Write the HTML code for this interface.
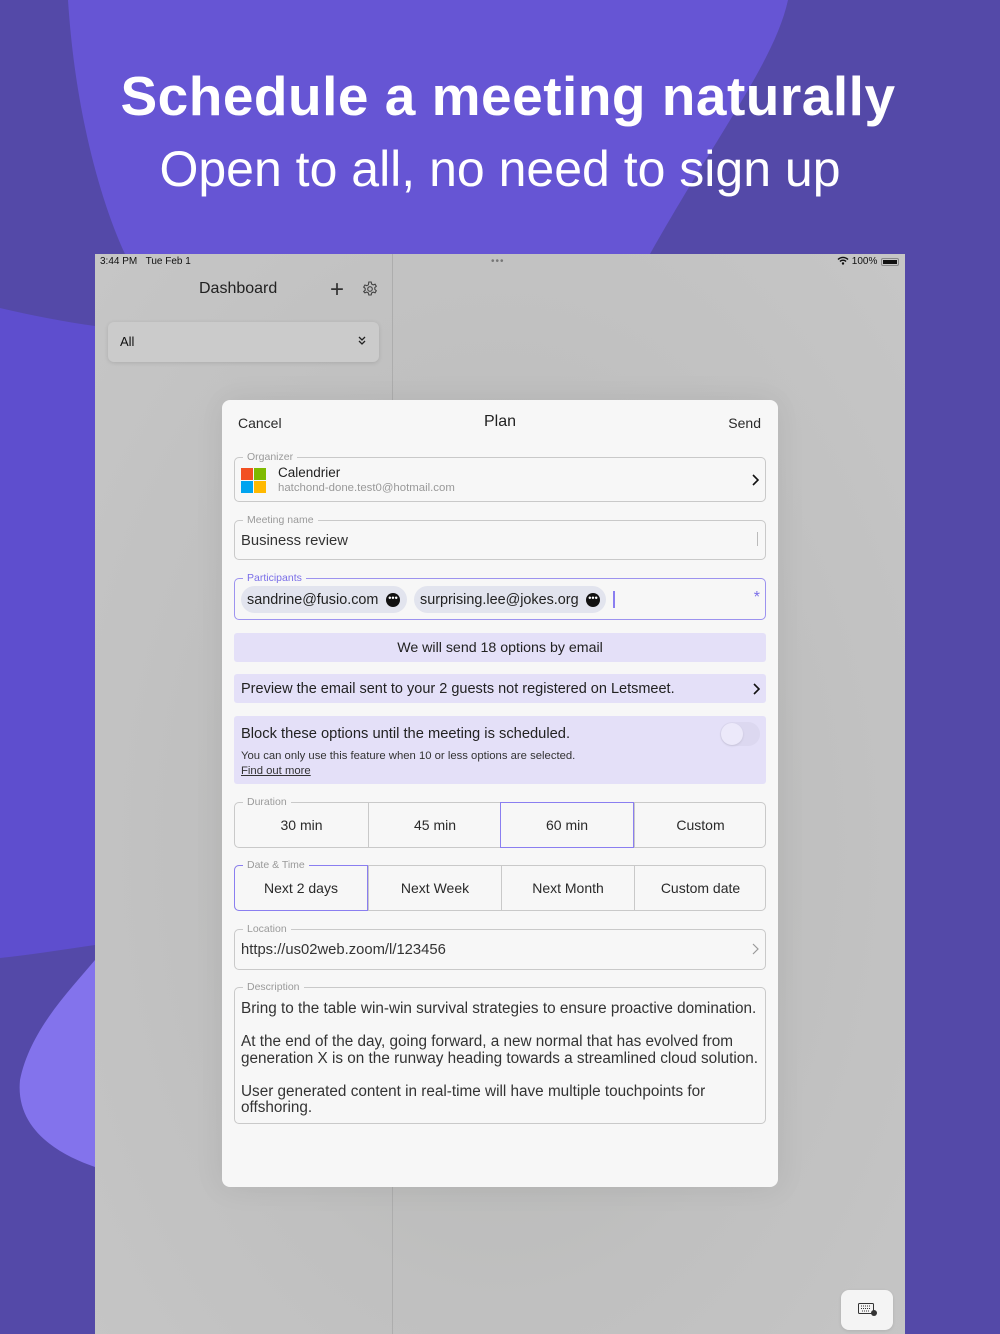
<!DOCTYPE html>
<html><head><meta charset="utf-8"><style>
*{margin:0;padding:0;box-sizing:border-box}
body{width:1000px;height:1334px;overflow:hidden;background:#5449A8;font-family:"Liberation Sans",sans-serif;position:relative}
.a{position:absolute}
.h1{left:8px;width:1000px;text-align:center;color:#fff;font-weight:bold;font-size:55px;top:64px;letter-spacing:0.5px}
.h2{left:0;width:1000px;text-align:center;color:#fff;font-size:50px;top:140px}
.screen{left:95px;top:254px;width:810px;height:1080px;background:radial-gradient(ellipse at 50% 55%,#b4b5b2 0%,#c0c0c0 55%,#c6c6c6 100%);overflow:hidden}
.modal{left:222px;top:400px;width:556px;height:787px;background:#f7f7f7;border-radius:8px;box-shadow:0 0 30px rgba(0,0,0,0.08)}
.fs{position:absolute;border:1px solid #c9c9c9;border-radius:5px}
.lbl{position:absolute;top:-8px;left:8px;background:#f7f7f7;padding:0 4px;font-size:10.5px;color:#9a9a9a;line-height:14px}
.t{font-size:14px;color:#2a2a2a}
.seg{position:absolute;top:0;height:100%;display:flex;align-items:center;justify-content:center;font-size:14px;color:#2a2a2a;border-left:1px solid #c9c9c9}
.sel{border:1px solid #8a7ef0;border-radius:0;z-index:2}
</style></head><body>
<svg class="a" style="left:0;top:0" width="1000" height="1334">
<path d="M68 0 C75 110 100 200 125 254 L650 254 C720 130 775 60 788 0 Z" fill="#6655D4"/>
<path d="M0 308 C30 315 65 322 95 326 L95 945 C60 950 30 955 0 958 Z" fill="#5E4ECE"/>
<path d="M95 960 C70 990 30 1030 20 1080 C15 1130 60 1155 95 1167 Z" fill="#8373EC"/>
</svg>
<div class="a h1">Schedule a meeting naturally</div>
<div class="a h2">Open to all, no need to sign up</div>
<div class="a screen">
  <div class="a" style="left:5px;top:2px;font-size:10px;color:#111">3:44 PM&nbsp;&nbsp;&nbsp;Tue Feb 1</div>
  <div class="a" style="left:396px;top:2px;font-size:10px;color:#777;letter-spacing:1px">•••</div>
  <div class="a" style="left:742px;top:2px;font-size:10px;color:#111">
    <svg width="12" height="9" viewBox="0 0 12 9" style="vertical-align:-1px"><path d="M1 3.5a7 7 0 0 1 10 0M3 5.5a4 4 0 0 1 6 0" stroke="#111" stroke-width="1.4" fill="none"/><circle cx="6" cy="7.5" r="1.2" fill="#111"/></svg> 100%</div>
  <div class="a" style="left:786px;top:4px;width:18px;height:8px;border:1px solid #888;border-radius:2px;padding:1px"><div style="background:#111;width:100%;height:100%"></div></div>
  <div class="a" style="left:297px;top:0;width:1px;height:1080px;background:#adadad"></div>
  <div class="a" style="left:104px;top:26px;font-size:16px;color:#222">Dashboard</div>
  <div class="a" style="left:235px;top:25px;font-size:24px;color:#333;line-height:22px;font-weight:300">+</div>
  <svg class="a" style="left:267px;top:27px" width="16" height="16" viewBox="0 0 16 16"><circle cx="8" cy="8" r="2.3" fill="none" stroke="#444" stroke-width="1.1"/><path d="M6.8 1h2.4l.4 2 1.6.9 1.9-.7 1.2 2.1-1.5 1.3v1.8l1.5 1.3-1.2 2.1-1.9-.7-1.6.9-.4 2H6.8l-.4-2-1.6-.9-1.9.7L1.7 10.5l1.5-1.3V7.4L1.7 6.1l1.2-2.1 1.9.7 1.6-.9z" fill="none" stroke="#444" stroke-width="1.1"/></svg>
  <div class="a" style="left:13px;top:68px;width:271px;height:40px;background:#cbcbcb;border-radius:6px;box-shadow:0 1px 4px rgba(0,0,0,0.12)"></div>
  <div class="a" style="left:25px;top:80px;font-size:13px;color:#111">All</div>
  <svg class="a" style="left:263px;top:82px" width="8" height="10" viewBox="0 0 8 10"><path d="M1 1l3 3 3-3M1 5l3 3 3-3" fill="none" stroke="#222" stroke-width="1.3"/></svg>
  <div class="a" style="left:746px;top:1036px;width:52px;height:40px;background:#f4f4f4;border-radius:8px;box-shadow:0 1px 3px rgba(0,0,0,0.1)"></div>
  <svg class="a" style="left:763px;top:1049px" width="20" height="14" viewBox="0 0 20 14"><rect x="0.5" y="0.5" width="15" height="10" rx="1" fill="none" stroke="#333"/><path d="M3 3h10M3 5.5h10M4 8h8" stroke="#333" stroke-width="1" stroke-dasharray="1 1"/><circle cx="16" cy="10" r="3" fill="#333"/></svg>
</div>
<div class="a modal">
  <div class="a t" style="left:16px;top:15px">Cancel</div>
  <div class="a" style="left:0;width:556px;text-align:center;top:13px;font-size:16px;color:#222">Plan</div>
  <div class="a t" style="right:17px;top:15px">Send</div>

  <div class="fs" style="left:12px;top:57px;width:532px;height:45px"><div class="lbl">Organizer</div>
    <div class="a" style="left:6px;top:10px;width:12px;height:12px;background:#F25022"></div>
    <div class="a" style="left:19px;top:10px;width:12px;height:12px;background:#7FBA00"></div>
    <div class="a" style="left:6px;top:23px;width:12px;height:12px;background:#00A4EF"></div>
    <div class="a" style="left:19px;top:23px;width:12px;height:12px;background:#FFB900"></div>
    <div class="a" style="left:43px;top:7px;font-size:13.5px;color:#222">Calendrier</div>
    <div class="a" style="left:43px;top:24px;font-size:11.4px;color:#999">hatchond-done.test0@hotmail.com</div>
    <svg class="a" style="right:6px;top:16px" width="8" height="12" viewBox="0 0 8 12"><path d="M2 1l5 5-5 5" fill="none" stroke="#111" stroke-width="1.6"/></svg>
  </div>

  <div class="fs" style="left:12px;top:120px;width:532px;height:40px"><div class="lbl">Meeting name</div>
    <div class="a" style="left:6px;top:12px;font-size:14.8px;color:#333">Business review</div>
    <div class="a" style="right:7px;top:11px;width:1.5px;height:14px;background:#bbb"></div>
  </div>

  <div class="fs" style="left:12px;top:178px;width:532px;height:42px;border-color:#9d93ef"><div class="lbl" style="color:#7a6ee8">Participants</div>
    <div class="a" style="left:6px;top:7px;width:166px;height:27px;background:#e2e4ee;border-radius:14px"></div>
    <div class="a" style="left:12px;top:13px;font-size:14.4px;color:#222">sandrine@fusio.com</div>
    <div class="a" style="left:151px;top:14px;width:14px;height:14px;border-radius:50%;background:#111;color:#fff;font-size:9px;line-height:10px;text-align:center">•••</div>
    <div class="a" style="left:179px;top:7px;width:192px;height:27px;background:#e2e4ee;border-radius:14px"></div>
    <div class="a" style="left:185px;top:13px;font-size:14.4px;color:#222">surprising.lee@jokes.org</div>
    <div class="a" style="left:351px;top:14px;width:14px;height:14px;border-radius:50%;background:#111;color:#fff;font-size:9px;line-height:10px;text-align:center">•••</div>
    <div class="a" style="left:378px;top:12px;width:1.5px;height:17px;background:#8a7ef0"></div>
    <div class="a" style="right:5px;top:10px;font-size:16px;color:#7a6ee8">*</div>
  </div>

  <div class="a" style="left:12px;top:233px;width:532px;height:29px;background:#e4e0f8;border-radius:3px;text-align:center;line-height:30px;font-size:14.2px;color:#222">We will send 18 options by email</div>
  <div class="a" style="left:12px;top:274px;width:532px;height:29px;background:#e4e0f8;border-radius:3px;line-height:31px;font-size:14.5px;color:#222;padding-left:7px">Preview the email sent to your 2 guests not registered on Letsmeet.
    <svg class="a" style="right:6px;top:9px" width="8" height="12" viewBox="0 0 8 12"><path d="M2 1l5 5-5 5" fill="none" stroke="#111" stroke-width="1.6"/></svg></div>

  <div class="a" style="left:12px;top:316px;width:532px;height:68px;background:#e4e0f8;border-radius:3px">
    <div class="a" style="left:7px;top:10px;font-size:14.7px;color:#222">Block these options until the meeting is scheduled.</div>
    <div class="a" style="left:7px;top:34px;font-size:11.3px;color:#333">You can only use this feature when 10 or less options are selected.</div>
    <div class="a" style="left:7px;top:49px;font-size:11.3px;color:#333;text-decoration:underline">Find out more</div>
    <div class="a" style="left:486px;top:6px;width:40px;height:24px;border-radius:12px;background:#dcd8f0"></div>
    <div class="a" style="left:487px;top:7px;width:22px;height:22px;border-radius:50%;background:#ece9fa;box-shadow:0 1px 2px rgba(0,0,0,0.1)"></div>
  </div>

  <div class="fs" style="left:12px;top:402px;width:532px;height:46px">
    <div class="seg" style="left:0;width:133px;border-left:none">30 min</div>
    <div class="seg" style="left:133px;width:133px">45 min</div>
    <div class="seg sel" style="left:265px;width:134px;top:-1px;height:46px">60 min</div>
    <div class="seg" style="left:399px;width:132px">Custom</div>
    <div class="lbl" style="z-index:3">Duration</div>
  </div>

  <div class="fs" style="left:12px;top:465px;width:532px;height:46px">
    <div class="seg sel" style="left:-1px;width:134px;top:-1px;height:46px;border-radius:5px 0 0 5px">Next 2 days</div>
    <div class="seg" style="left:133px;width:133px">Next Week</div>
    <div class="seg" style="left:266px;width:133px">Next Month</div>
    <div class="seg" style="left:399px;width:132px">Custom date</div>
    <div class="lbl" style="z-index:3">Date &amp; Time</div>
  </div>

  <div class="fs" style="left:12px;top:529px;width:532px;height:41px"><div class="lbl">Location</div>
    <div class="a" style="left:6px;top:12px;font-size:14.8px;color:#333">https://us02web.zoom/l/123456</div>
    <svg class="a" style="right:6px;top:13px" width="8" height="12" viewBox="0 0 8 12"><path d="M2 1l5 5-5 5" fill="none" stroke="#999" stroke-width="1.2"/></svg>
  </div>

  <div class="fs" style="left:12px;top:587px;width:532px;height:137px"><div class="lbl">Description</div>
    <div class="a" style="left:6px;top:13px;width:524px;font-size:15.3px;line-height:16.5px;color:#333">Bring to the table win-win survival strategies to ensure proactive domination.<br><br>At the end of the day, going forward, a new normal that has evolved from generation X is on the runway heading towards a streamlined cloud solution.<br><br>User generated content in real-time will have multiple touchpoints for offshoring.</div>
  </div>
</div>
</body></html>
